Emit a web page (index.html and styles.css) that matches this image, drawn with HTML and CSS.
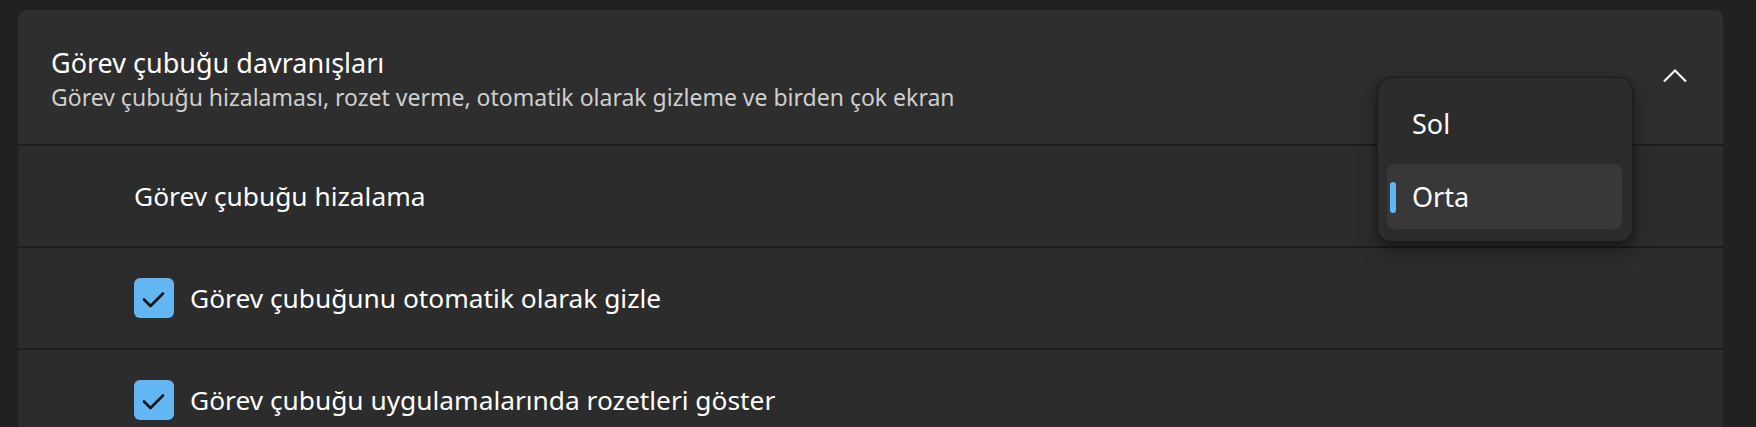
FILE: index.html
```html
<!DOCTYPE html>
<html lang="tr">
<head>
<meta charset="utf-8">
<title>Görev çubuğu davranışları</title>
<link rel="stylesheet" href="styles.css">
</head>
<body>
<div class="page">
  <section class="card">
    <header class="card-header">
      <div class="header-text">
        <div class="title">Görev çubuğu davranışları</div>
        <div class="subtitle">Görev çubuğu hizalaması, rozet verme, otomatik olarak gizleme ve birden çok ekran</div>
      </div>
      <svg class="chevron" width="24" height="14" viewBox="0 0 24 14" aria-hidden="true">
        <polyline points="1,12.5 12,1.5 23,12.5" fill="none" stroke="#ffffff" stroke-width="2"/>
      </svg>
    </header>
    <div class="row">
      <span class="row-label">Görev çubuğu hizalama</span>
    </div>
    <div class="row">
      <span class="checkbox">
        <svg width="40" height="40" viewBox="0 0 40 40" aria-hidden="true">
          <polyline points="10,21.5 16.5,28 29,15.5" fill="none" stroke="#161616" stroke-width="2.6" stroke-linecap="round" stroke-linejoin="round"/>
        </svg>
      </span>
      <span class="row-label">Görev çubuğunu otomatik olarak gizle</span>
    </div>
    <div class="row">
      <span class="checkbox">
        <svg width="40" height="40" viewBox="0 0 40 40" aria-hidden="true">
          <polyline points="10,21.5 16.5,28 29,15.5" fill="none" stroke="#161616" stroke-width="2.6" stroke-linecap="round" stroke-linejoin="round"/>
        </svg>
      </span>
      <span class="row-label">Görev çubuğu uygulamalarında rozetleri göster</span>
    </div>

    <div class="menu">
      <div class="menu-item">Sol</div>
      <div class="menu-item selected"><span class="accent"></span>Orta</div>
    </div>
  </section>
</div>
</body>
</html>
```

FILE: styles.css
```css
* { box-sizing: border-box; }

html, body {
  margin: 0;
  padding: 0;
  background: #212121;
  height: 100%;
  overflow: hidden;
}

body {
  font-family: "Noto Sans", "Open Sans", sans-serif;
  color: #ffffff;
}

.page {
  padding: 10px 33px 0 18px;
}

.card {
  position: relative;
  display: flex;
  flex-direction: column;
  gap: 2px;
  background: #1d1d1d;
  border-radius: 8px 8px 0 0;
}

.card-header {
  height: 134px;
  display: flex;
  align-items: center;
  justify-content: space-between;
  padding: 0 36px 0 33px;
  background: #2e2e2e;
  border-radius: 8px 8px 0 0;
}

.header-text {
  display: flex;
  flex-direction: column;
  padding-top: 4px;
}

.title {
  font-size: 27px;
  line-height: 36px;
  color: #ffffff;
}

.subtitle {
  font-size: 23px;
  line-height: 32px;
  color: #cfcfcf;
}

.chevron {
  display: block;
  margin-top: -2px;
}

.row {
  height: 100px;
  display: flex;
  align-items: center;
  gap: 16px;
  padding-left: 116px;
  background: #2c2c2c;
}

.row-label {
  font-size: 26.3px;
  line-height: 36px;
}

.checkbox {
  width: 40px;
  height: 40px;
  border-radius: 6px;
  background: #62b6f3;
  display: flex;
}

.menu {
  position: absolute;
  top: 67px;
  right: 90px;
  width: 256px;
  height: 165px;
  padding: 13px 10px 12px 9px;
  display: flex;
  flex-direction: column;
  gap: 8px;
  background: #2c2c2c;
  border: 1px solid #1c1c1c;
  border-radius: 14px;
  box-shadow: 0 8px 20px rgba(0, 0, 0, 0.35), 0 2px 6px rgba(0, 0, 0, 0.25);
}

.menu-item {
  position: relative;
  height: 66px;
  display: flex;
  align-items: center;
  padding-left: 25px;
  font-size: 27px;
  line-height: 36px;
  border-radius: 8px;
}

.menu-item.selected {
  background: #383838;
}

.accent {
  position: absolute;
  left: 3px;
  top: 18px;
  width: 6px;
  height: 31px;
  border-radius: 3px;
  background: #62b6f3;
}
```
